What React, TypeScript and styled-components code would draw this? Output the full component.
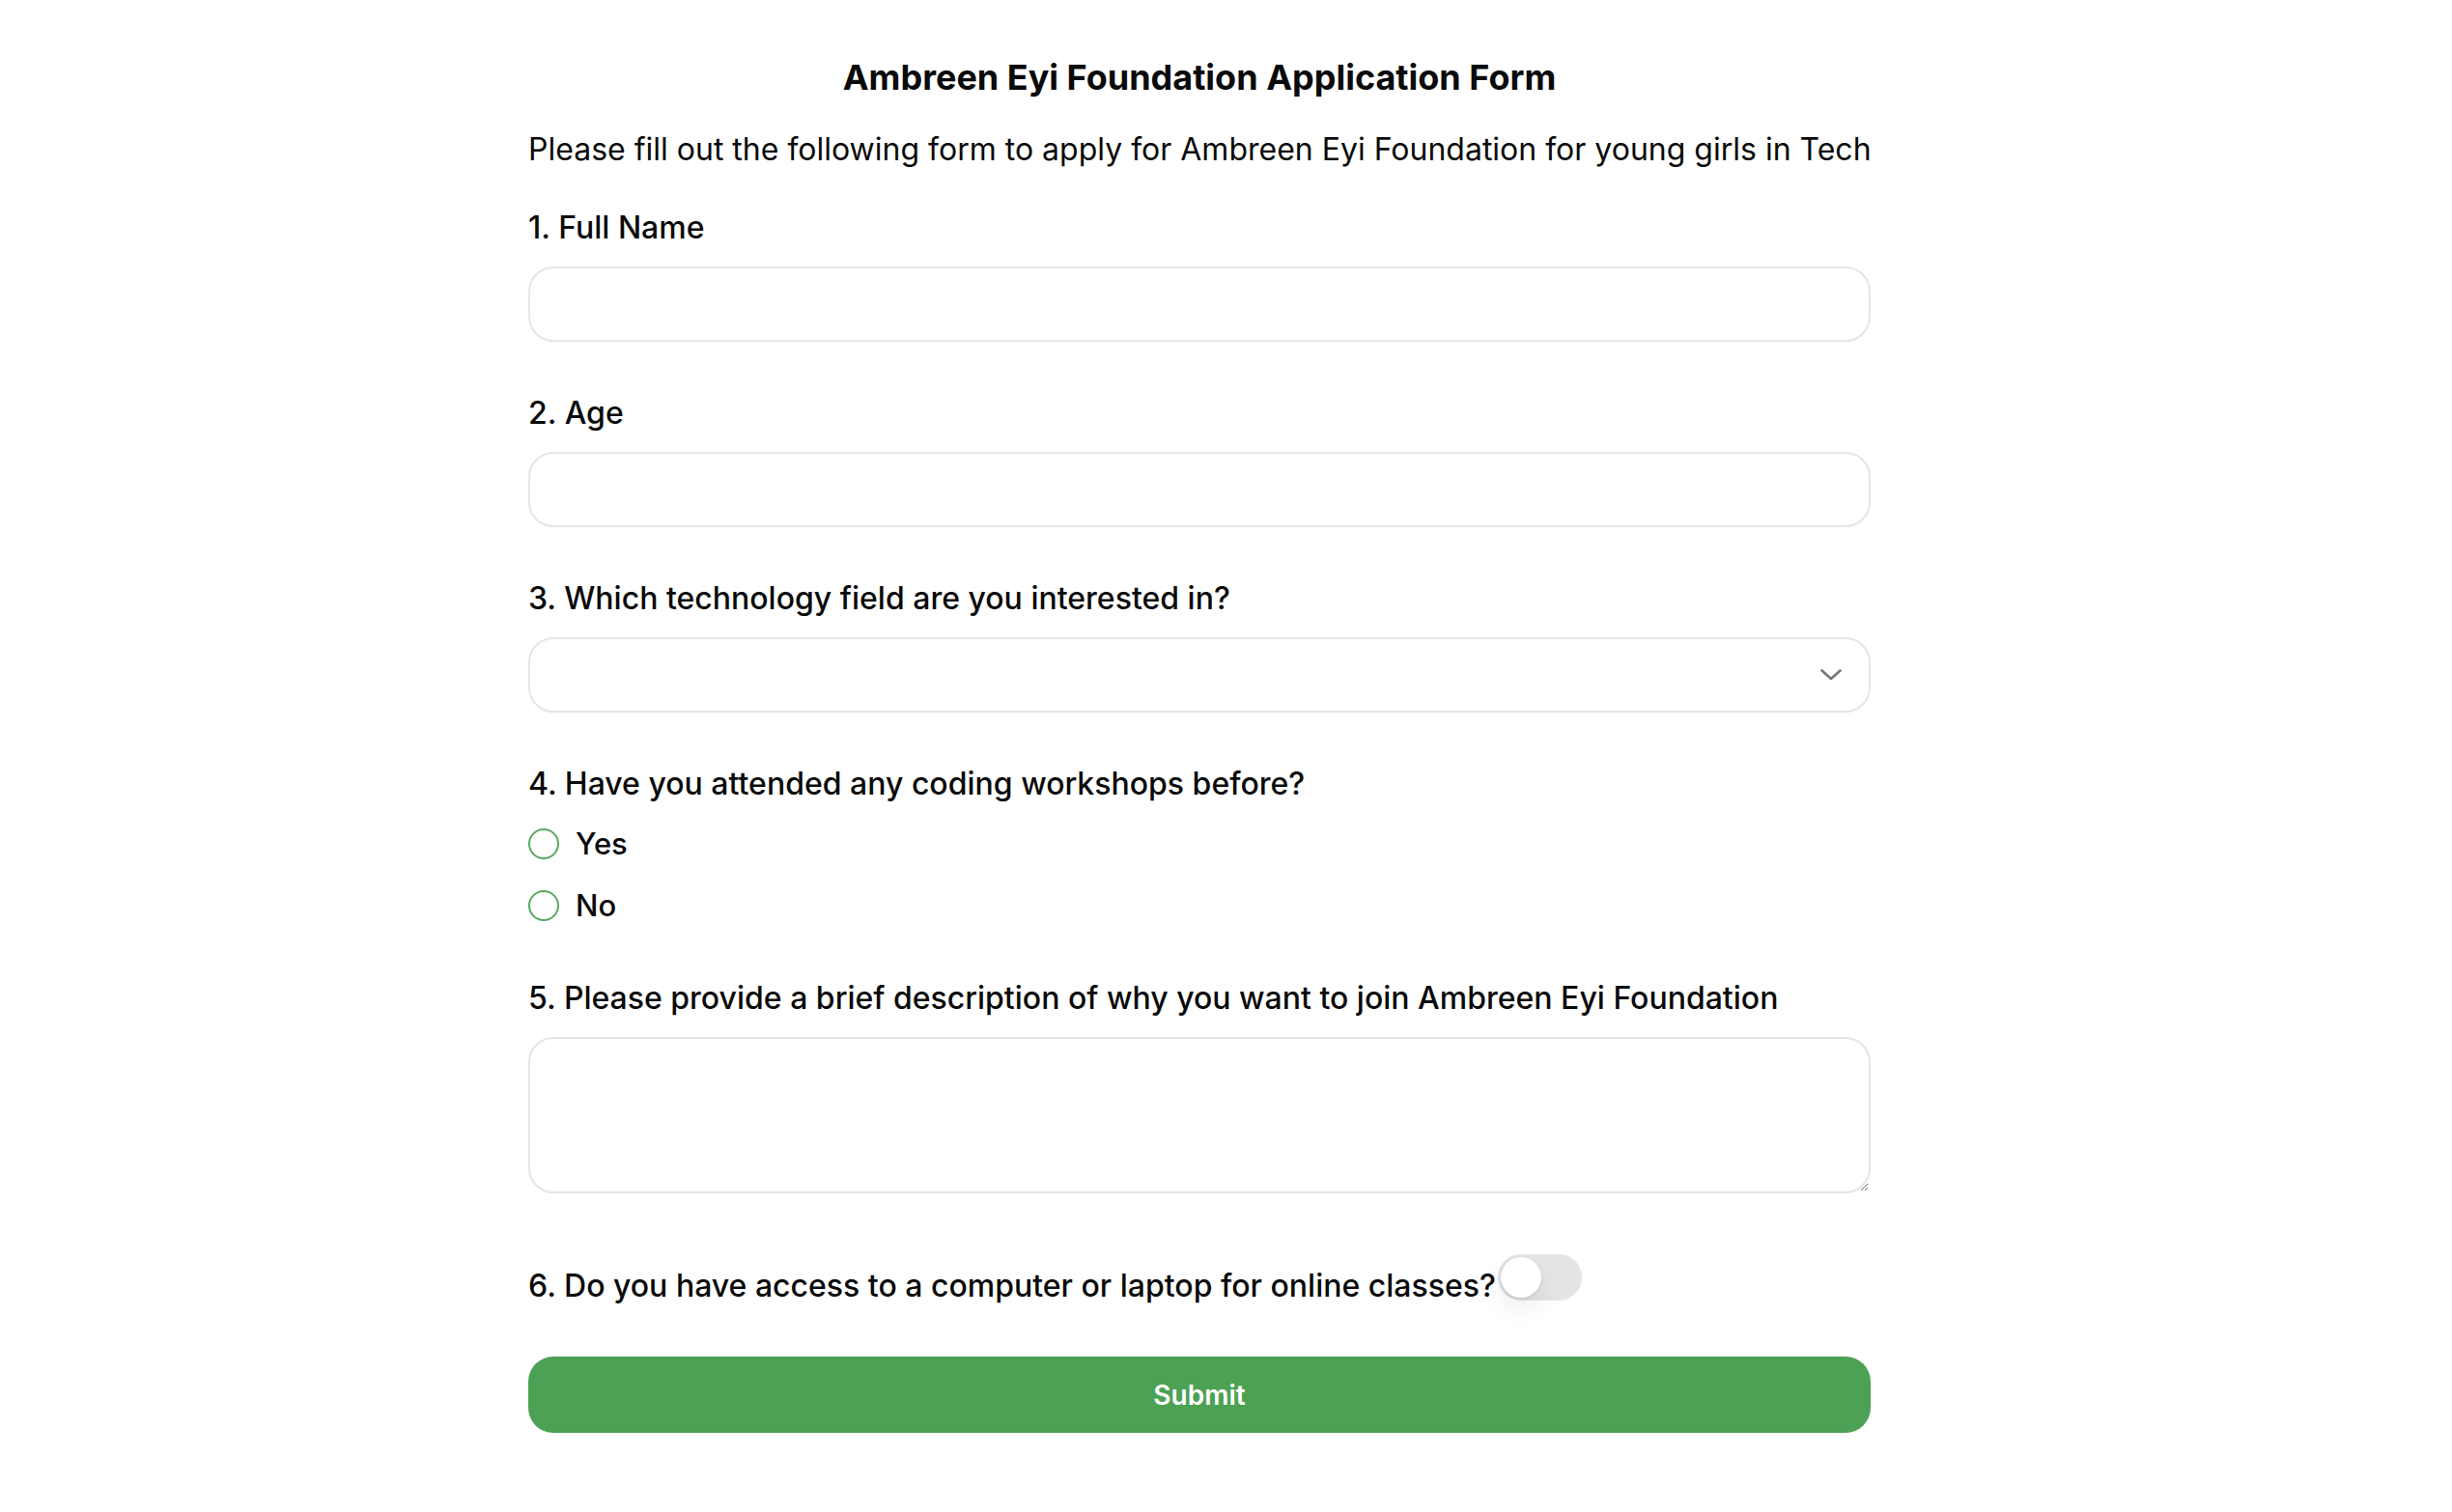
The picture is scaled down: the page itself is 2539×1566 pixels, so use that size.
import React from "react";
import styled, { createGlobalStyle } from "styled-components";

const GlobalStyle = createGlobalStyle`
  html, body { margin: 0; padding: 0; background: #ffffff; }
  body { font-family: Inter, "Noto Sans", sans-serif; color: #0a0a0a; }
  * { box-sizing: border-box; }
`;

const Page = styled.div`
  padding: 58px 0 80px 547px;
`;

const Form = styled.form`
  width: 1390px;
  display: flex;
  flex-direction: column;
`;

const Title = styled.h1`
  margin: 0;
  font-size: 36px;
  line-height: 44px;
  font-weight: 700;
  text-align: center;
  color: #0a0a0a;
`;

const Intro = styled.p`
  margin: 33px 0 42px;
  font-size: 32px;
  line-height: 39px;
  font-weight: 400;
  color: #0a0a0a;
  white-space: nowrap;
`;

const Field = styled.div<{ $gap?: number }>`
  display: flex;
  flex-direction: column;
  margin-bottom: ${(p) => p.$gap ?? 54}px;
`;

const Label = styled.label`
  font-size: 32px;
  line-height: 39px;
  font-weight: 500;
  color: #0a0a0a;
  margin-bottom: 21px;
  white-space: nowrap;
`;

const InlineLabel = styled(Label)`
  margin-bottom: 0;
`;

const Input = styled.input`
  display: block;
  width: 100%;
  height: 78px;
  border: 2px solid #e5e5e5;
  border-radius: 26px;
  padding: 0 26px;
  font: inherit;
  font-size: 28px;
  outline: none;
  background: #fff;
`;

const SelectWrap = styled.div`
  position: relative;
  width: 100%;
`;

const Select = styled.select`
  display: block;
  width: 100%;
  height: 78px;
  border: 2px solid #e5e5e5;
  border-radius: 26px;
  padding: 0 26px;
  font: inherit;
  font-size: 28px;
  outline: none;
  background: #fff;
  appearance: none;
  -webkit-appearance: none;
  color: #0a0a0a;
`;

const Chevron = styled.svg`
  position: absolute;
  right: 30px;
  top: 50%;
  transform: translateY(-50%);
  pointer-events: none;
`;

const RadioList = styled.div`
  display: flex;
  flex-direction: column;
  gap: 26px;
  margin-top: 3px;
`;

const RadioRow = styled.label`
  display: flex;
  align-items: center;
  gap: 17px;
  font-size: 31px;
  line-height: 38px;
  font-weight: 500;
  color: #0a0a0a;
`;

const RadioCircle = styled.span`
  width: 32px;
  height: 32px;
  border-radius: 50%;
  border: 2px solid #56a95d;
  background: #fff;
  flex: none;
`;

const TextArea = styled.textarea`
  display: block;
  width: 100%;
  height: 162px;
  border: 2px solid #e5e5e5;
  border-radius: 26px;
  padding: 20px 26px;
  font: inherit;
  font-size: 28px;
  outline: none;
  resize: vertical;
  background: #fff;
`;

const ToggleRow = styled.div`
  display: flex;
  align-items: flex-end;
  margin-top: 63px;
  margin-bottom: 54px;
`;

const Track = styled.button<{ $on: boolean }>`
  width: 87px;
  height: 48px;
  border-radius: 24px;
  border: none;
  padding: 3px;
  margin: 0 0 4px 2px;
  background: ${(p) => (p.$on ? "#4ca154" : "#e4e4e7")};
  display: flex;
  justify-content: ${(p) => (p.$on ? "flex-end" : "flex-start")};
  align-items: center;
  cursor: pointer;
`;

const Knob = styled.span`
  width: 42px;
  height: 42px;
  border-radius: 50%;
  background: #ffffff;
  box-shadow: 0 1px 3px rgba(0, 0, 0, 0.12), 0 12px 26px rgba(0, 0, 0, 0.07);
`;

const Submit = styled.button`
  width: 100%;
  height: 79px;
  border: none;
  border-radius: 26px;
  background: #4ca154;
  color: #ffffff;
  font-family: Inter, "Noto Sans", sans-serif;
  font-size: 28px;
  font-weight: 600;
  cursor: pointer;
`;

export default function App() {
  const [on, setOn] = React.useState(false);
  return (
    <>
      <GlobalStyle />
      <Page>
        <Form onSubmit={(e) => e.preventDefault()}>
          <Title>Ambreen Eyi Foundation Application Form</Title>
          <Intro>
            Please fill out the following form to apply for Ambreen Eyi Foundation for young girls in Tech
          </Intro>

          <Field>
            <Label>1. Full Name</Label>
            <Input type="text" />
          </Field>

          <Field>
            <Label>2. Age</Label>
            <Input type="text" />
          </Field>

          <Field>
            <Label>3. Which technology field are you interested in?</Label>
            <SelectWrap>
              <Select defaultValue="">
                <option value=""></option>
                <option value="web">Web Development</option>
                <option value="data">Data Science</option>
              </Select>
              <Chevron width="22" height="12" viewBox="0 0 22 12" fill="none">
                <path d="M1.5 1.5 L11 10 L20.5 1.5" stroke="#767676" strokeWidth="2.6" strokeLinecap="round" strokeLinejoin="round" />
              </Chevron>
            </SelectWrap>
          </Field>

          <Field $gap={57}>
            <Label>4. Have you attended any coding workshops before?</Label>
            <RadioList>
              <RadioRow>
                <RadioCircle />
                Yes
              </RadioRow>
              <RadioRow>
                <RadioCircle />
                No
              </RadioRow>
            </RadioList>
          </Field>

          <Field $gap={0}>
            <Label>5. Please provide a brief description of why you want to join Ambreen Eyi Foundation</Label>
            <TextArea />
          </Field>

          <ToggleRow>
            <InlineLabel>6. Do you have access to a computer or laptop for online classes?</InlineLabel>
            <Track type="button" $on={on} onClick={() => setOn(!on)}>
              <Knob />
            </Track>
          </ToggleRow>

          <Submit type="submit">Submit</Submit>
        </Form>
      </Page>
    </>
  );
}
